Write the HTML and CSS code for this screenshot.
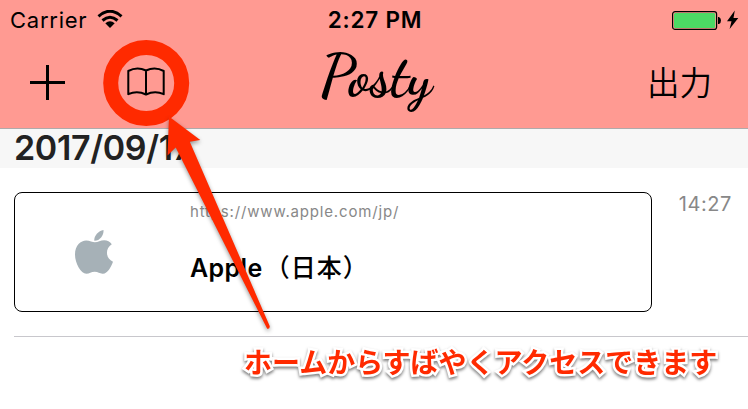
FILE: index.html
```
<!DOCTYPE html>
<html lang="ja">
<head>
<meta charset="utf-8">
<title>Posty</title>
<link rel="stylesheet" href="styles.css">
</head>
<body>
<div class="screen">
  <header class="header">
    <div class="status">
      <div class="carrier">
        <span>Carrier</span>
        <svg class="wifi" width="26" height="20" viewBox="0 0 26 20">
          <path d="M1.5 6.3Q13-3.8 24.5 6.3M5.5 10.5Q13 4 20.5 10.5" fill="none" stroke="#000" stroke-width="3"/>
          <path d="M8.3 13.3Q13 9.3 17.7 13.3L13 18Z"/>
        </svg>
      </div>
      <span class="clock">2:27 PM</span>
      <svg class="battery" width="68" height="22" viewBox="0 0 68 22">
        <rect x=".6" y="2.6" width="44" height="17.8" rx="2.5" fill="none" stroke="#000" stroke-width="1.2"/>
        <rect x="2" y="4" width="41.2" height="15" rx="1.5" fill="#4cd964"/>
        <path d="M46 8h1q2 1 2 3.5T47 15h-1Z"/>
        <path d="M62.8 1.5 55 12.2h4.5L57.6 20 66.3 9H61.5Z"/>
      </svg>
    </div>
    <nav class="navbar">
      <div class="actions">
        <svg width="35" height="35" viewBox="0 0 35 35"><path d="M17.5 0v35M0 17.5h35" fill="none" stroke="#000" stroke-width="3"/></svg>
        <svg width="38" height="30" viewBox="0 0 38 30" fill="none" stroke="#000" stroke-width="2" stroke-linejoin="round">
          <path d="M19 3.5Q10-.8 1.3 4V27.2Q10 23 19 27.5Q28 23 36.7 27.2V4Q28-.8 19 3.5ZM19 3.5V27.5"/>
        </svg>
      </div>
      <h1 class="brand">Posty</h1>
      <span class="export">出力</span>
    </nav>
  </header>
  <h2 class="date">2017/09/17</h2>
  <main class="entry">
    <article class="card">
      <div class="thumb">
        <svg width="38" height="45" viewBox="0 0 38 45" fill="#a6b1b7">
          <path d="M28.5 0C29 5.5 24.5 11 19.3 10.8C18.8 5.8 23.5 .8 28.5 0Z"/>
          <path d="M19.8 12.3C23 12.3 25.5 10.2 29.2 10.2C32.3 10.2 35 11.7 36.8 14.3C29.7 18.5 30.7 28.8 38 31.7C36.2 37 32.4 43.5 28 43.7C24.5 43.9 23.4 41.8 19.7 41.8C16 41.8 14.6 43.8 11.3 43.8C6 43.7 0 33.4 0 24.5C0 15.2 5.8 10.4 11.2 10.4C14.7 10.4 17.7 12.3 19.8 12.3Z"/>
        </svg>
      </div>
      <div class="info">
        <span class="url">https://www.apple.com/jp/</span>
        <span class="title">Apple<span class="region">（日本）</span></span>
      </div>
    </article>
    <time class="time">14:27</time>
  </main>
  <svg class="pointer" width="748" height="409" viewBox="0 0 748 409">
    <circle cx="146.2" cy="83" r="35.5"/>
    <path d="M169 116.5 200.3 140 189.8 141.8 269.8 326.2Q269.7 329.5 267.2 328.7L175.7 147.5 167.5 155.5Z"/>
  </svg>
  <p class="callout">ホームからすばやくアクセスできます</p>
</div>
</body>
</html>
```

FILE: styles.css
```
* { box-sizing: border-box; }
body {
  margin: 0;
  background: #fff;
  color: #000;
  font-family: Inter, "Noto Sans CJK JP", sans-serif;
}
.screen {
  position: relative;
  width: 748px;
  height: 409px;
  overflow: hidden;
}
.header {
  height: 129px;
  background: #ff9a92;
  border-bottom: 1px solid #b0aaaa;
}
.status {
  display: grid;
  grid-template-columns: 1fr auto 1fr;
  align-items: center;
  height: 40px;
  padding: 0 8px 0 10px;
  font-size: 22px;
  line-height: 40px;
}
.carrier { display: flex; align-items: center; gap: 10px; letter-spacing: 0.75px; }
.clock { font-weight: 600; font-size: 22.5px; letter-spacing: 0.8px; }
.battery { justify-self: end; }
.navbar {
  display: grid;
  grid-template-columns: 1fr auto 1fr;
  align-items: center;
  height: 84px;
  padding: 0 36px 0 30px;
}
.actions { display: flex; align-items: center; gap: 62px; }
.brand {
  margin: 0;
  padding: 0 0 10px 10px;
  font: 700 59px/74px "Dancing Script", "Liberation Serif", cursive;
}
.export {
  justify-self: end;
  padding-top: 3px;
  font-size: 32.5px;
  font-weight: 350;
  line-height: 81px;
}
.date {
  margin: 0;
  height: 39px;
  padding-left: 14px;
  background: #f7f7f7;
  color: #222;
  font-size: 34px;
  font-weight: 600;
  line-height: 37px;
  letter-spacing: -0.35px;
}
.entry {
  display: flex;
  justify-content: space-between;
  height: 169px;
  margin-left: 14px;
  padding: 24px 16px 0 0;
  border-bottom: 1px solid #c8c7cc;
}
.card {
  display: flex;
  width: 638px;
  height: 120px;
  border: 1px solid #000;
  border-radius: 8px;
}
.thumb {
  display: flex;
  align-items: center;
  justify-content: center;
  width: 157px;
}
.info { display: flex; flex-direction: column; padding: 9px 0 0 18px; }
.url { color: #888; font-size: 15px; line-height: 20px; letter-spacing: 0.83px; }
.title { margin-top: 28px; font-size: 25px; font-weight: 600; line-height: 36px; letter-spacing: 0.4px; }
.region { margin-left: 2px; font-weight: 500; letter-spacing: 1px; }
.time { color: #888; font-size: 20px; line-height: 24px; letter-spacing: 0.6px; }
.pointer {
  position: absolute;
  inset: 0;
  fill: #ff2a00;
}
.pointer circle { fill: none; stroke: #ff2a00; stroke-width: 15; }
.pointer path { filter: drop-shadow(0 2px 2px rgba(0, 0, 0, 0.4)); }
.callout {
  position: absolute;
  left: 244px;
  top: 341px;
  margin: 0;
  color: #ff2a00;
  font: 700 28px/40px "Noto Sans CJK JP", sans-serif;
  white-space: nowrap;
  -webkit-text-stroke: 5px #fff;
  paint-order: stroke fill;
  filter: drop-shadow(0 2px 1.5px rgba(0, 0, 0, 0.5));
}
```
